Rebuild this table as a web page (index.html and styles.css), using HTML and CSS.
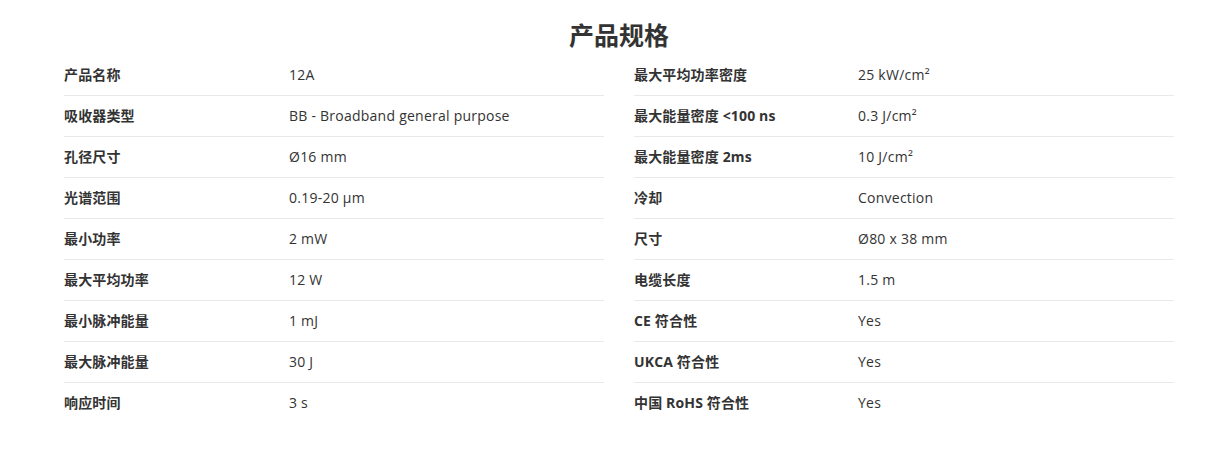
FILE: index.html
```html
<!DOCTYPE html>
<html lang="zh-CN">
<head>
<meta charset="utf-8">
<title>产品规格</title>
<link rel="stylesheet" href="styles.css">
</head>
<body>
<section class="specs">
  <h2 class="specs-title">产品规格</h2>
  <div class="specs-grid">
    <div class="spec-col">
      <div class="spec-row"><div class="spec-label">产品名称</div><div class="spec-value">12A</div></div>
      <div class="spec-row"><div class="spec-label">吸收器类型</div><div class="spec-value">BB - Broadband general purpose</div></div>
      <div class="spec-row"><div class="spec-label">孔径尺寸</div><div class="spec-value">Ø16 mm</div></div>
      <div class="spec-row"><div class="spec-label">光谱范围</div><div class="spec-value">0.19-20 µm</div></div>
      <div class="spec-row"><div class="spec-label">最小功率</div><div class="spec-value">2 mW</div></div>
      <div class="spec-row"><div class="spec-label">最大平均功率</div><div class="spec-value">12 W</div></div>
      <div class="spec-row"><div class="spec-label">最小脉冲能量</div><div class="spec-value">1 mJ</div></div>
      <div class="spec-row"><div class="spec-label">最大脉冲能量</div><div class="spec-value">30 J</div></div>
      <div class="spec-row"><div class="spec-label">响应时间</div><div class="spec-value">3 s</div></div>
    </div>
    <div class="spec-col">
      <div class="spec-row"><div class="spec-label">最大平均功率密度</div><div class="spec-value">25 kW/cm²</div></div>
      <div class="spec-row"><div class="spec-label">最大能量密度 &lt;100 ns</div><div class="spec-value">0.3 J/cm²</div></div>
      <div class="spec-row"><div class="spec-label">最大能量密度 2ms</div><div class="spec-value">10 J/cm²</div></div>
      <div class="spec-row"><div class="spec-label">冷却</div><div class="spec-value">Convection</div></div>
      <div class="spec-row"><div class="spec-label">尺寸</div><div class="spec-value">Ø80 x 38 mm</div></div>
      <div class="spec-row"><div class="spec-label">电缆长度</div><div class="spec-value">1.5 m</div></div>
      <div class="spec-row"><div class="spec-label">CE 符合性</div><div class="spec-value">Yes</div></div>
      <div class="spec-row"><div class="spec-label">UKCA 符合性</div><div class="spec-value">Yes</div></div>
      <div class="spec-row"><div class="spec-label">中国 RoHS 符合性</div><div class="spec-value">Yes</div></div>
    </div>
  </div>
</section>
</body>
</html>
```

FILE: styles.css
```css
html, body {
  margin: 0;
  padding: 0;
  background: #ffffff;
}

body {
  font-family: "Open Sans", "Noto Sans CJK SC", sans-serif;
  color: #333333;
  font-size: 14px;
}

.specs {
  width: 1110px;
  margin-left: 64px;
}

.specs-title {
  margin: 17px 0 2px;
  font-size: 25px;
  line-height: 36px;
  font-weight: 700;
  text-align: center;
  color: #333333;
}

.specs-grid {
  display: grid;
  grid-template-columns: 540px 540px;
  column-gap: 30px;
}

.spec-row {
  display: flex;
  height: 40px;
  line-height: 40px;
  border-bottom: 1px solid #e9e9e9;
}

.spec-row:last-child {
  border-bottom: none;
}

.spec-label {
  width: 225px;
  flex: none;
  font-weight: 700;
  letter-spacing: 0.15px;
}

.spec-col + .spec-col .spec-label {
  width: 224px;
}

.spec-value {
  flex: 1;
  letter-spacing: 0.24px;
}
```
